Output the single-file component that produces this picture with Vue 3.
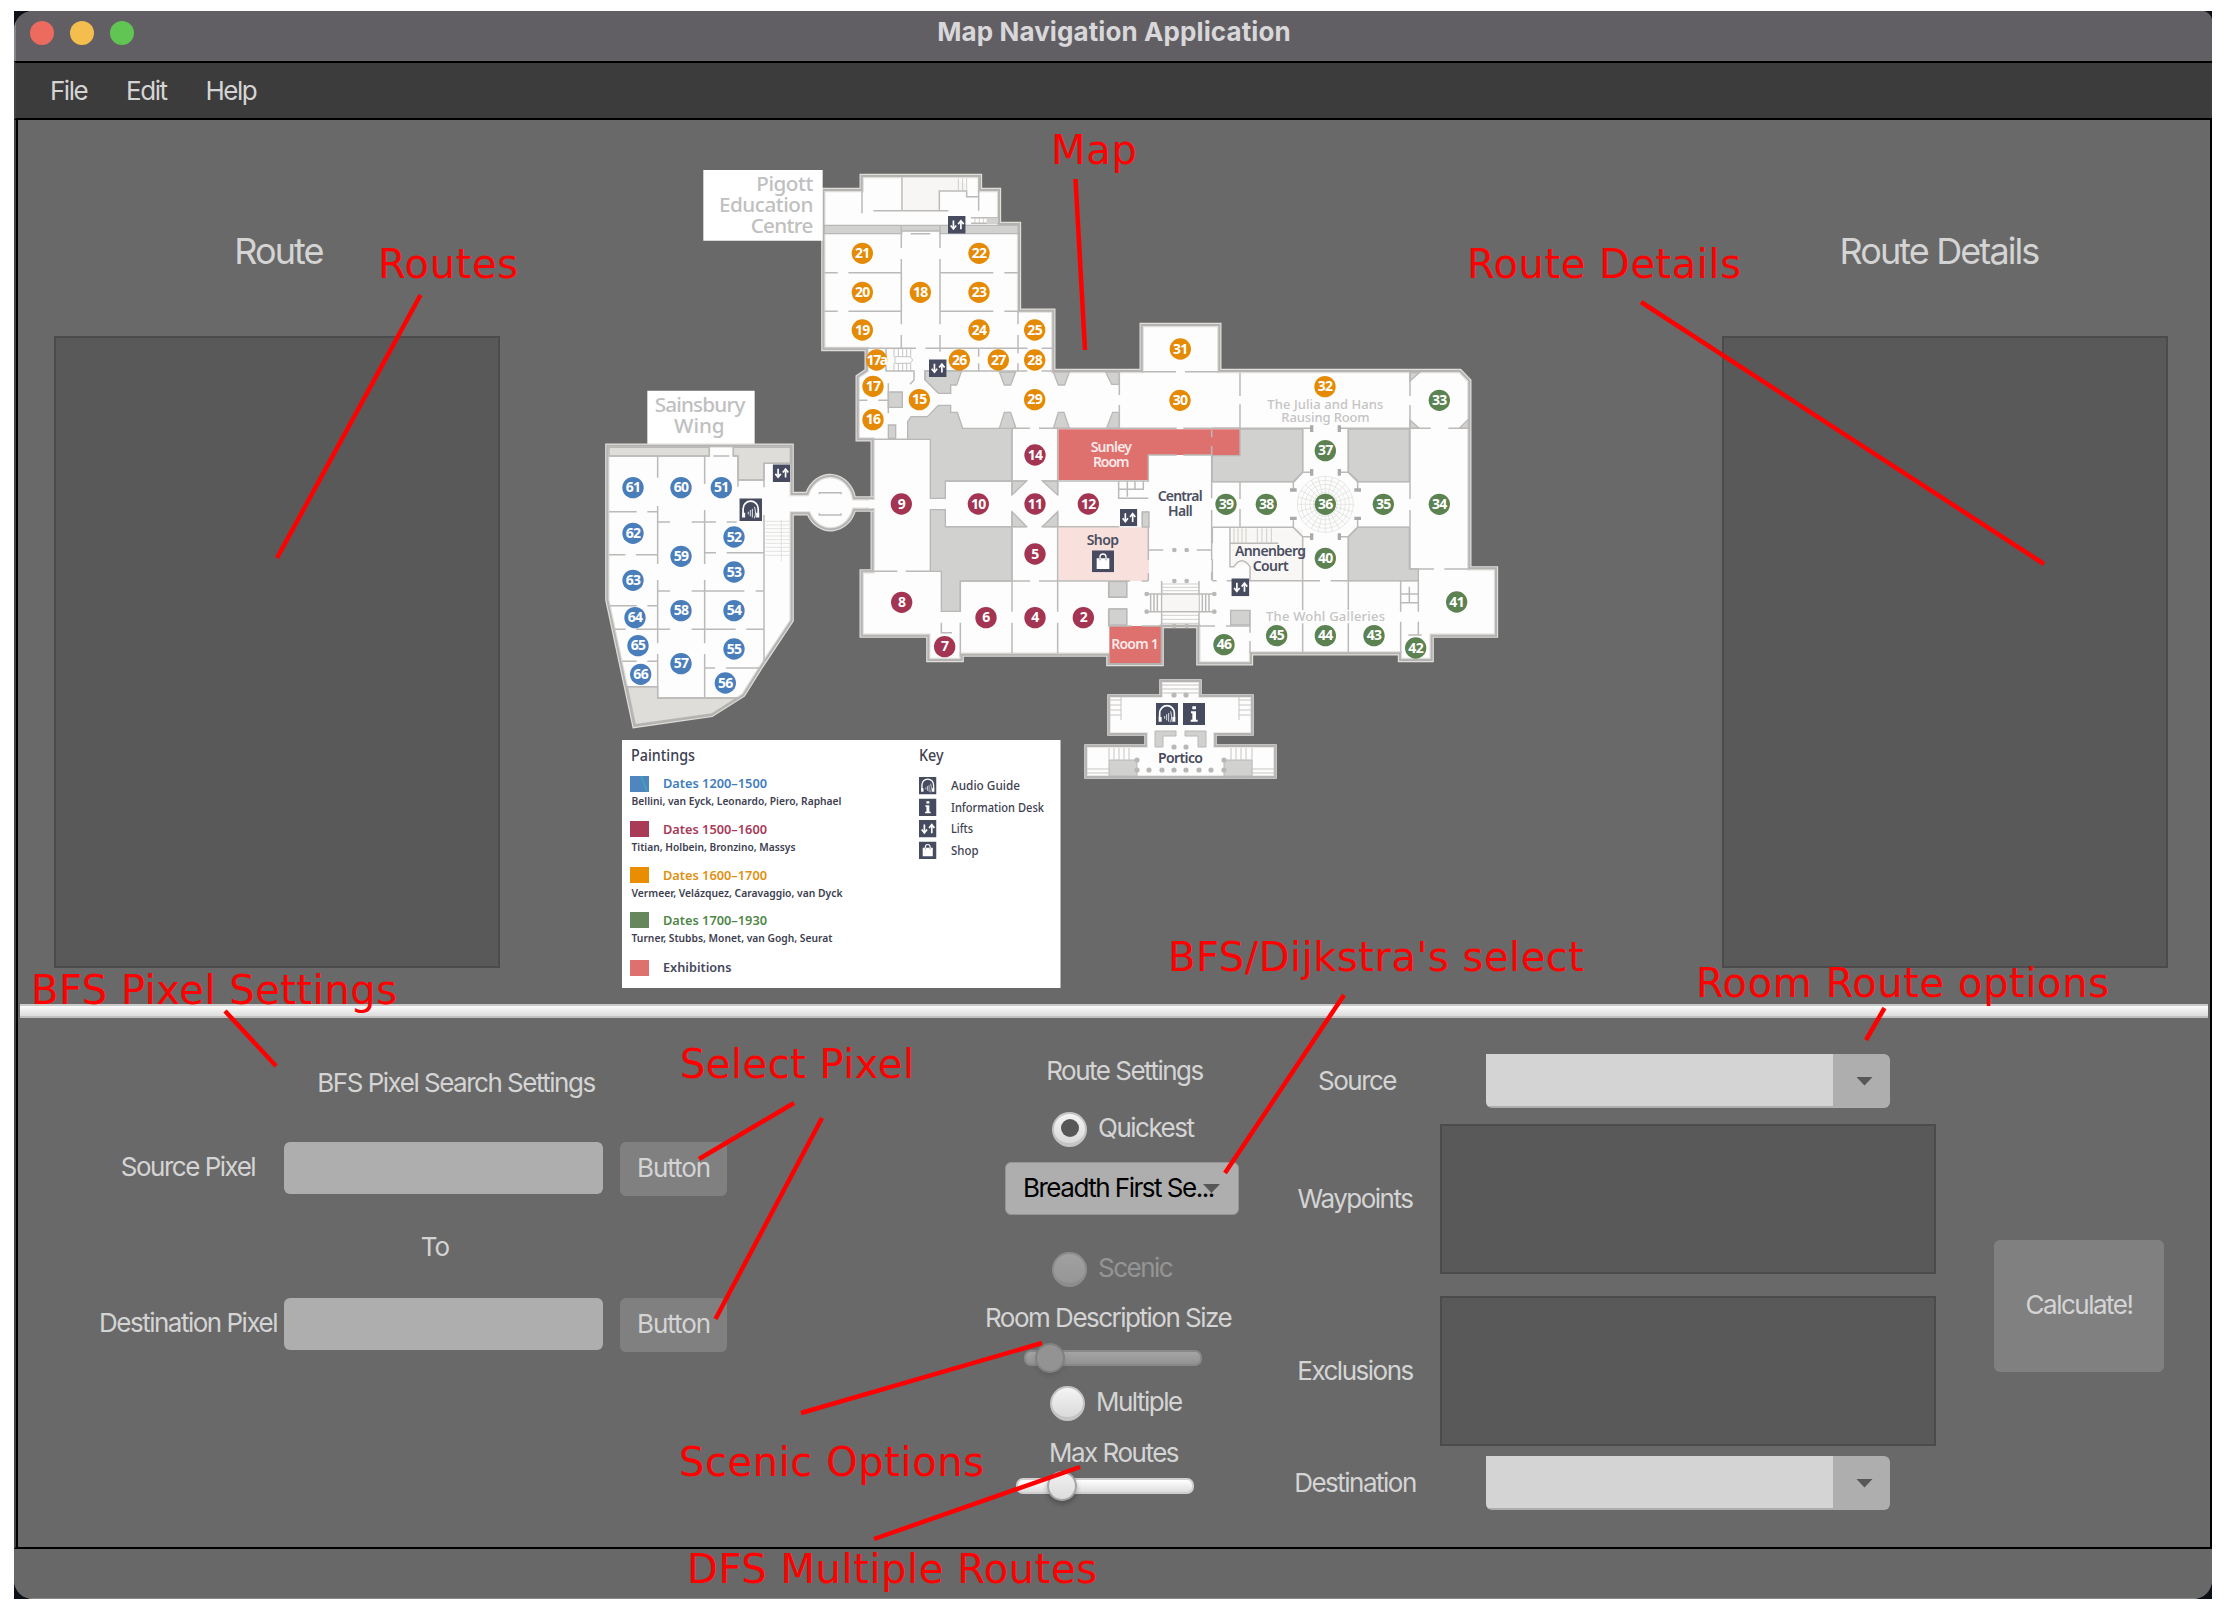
<script setup>
const menus = ['File', 'Edit', 'Help']

const blue = '#4a7ebb'
const red = '#a33552'
const orange = '#e58a05'
const green = '#5d8252'

// Outline of the main building
const mainHull =
  'M-50-570H65V-612H420V-570H477V-468H537V-208H640V-27H905V-165H1138V-27H1860L1888 2V565H1968V767H1775V840H1680V820H1233V850H1075V738H965V852H805V824H365V840H265V767H65V574H98V178H53V-10L80-28V-93H-50Z'
const wingHull =
  'M52 197H605V342H652A73 83 0 0 1 792 355H848V389H792A73 83 0 0 1 656 400H605V722L510 865L460 945L365 1005L133 1038L52 660Z'
const porticoHull =
  'M1161 681H1200V696H1252V734H1215V746H1275V777H1086V746H1146V734H1109V696H1161Z'

// Room markers, grouped by wing: number, x, y in the wing's own units
const pigottRooms = [
  ['21', 817, 310], ['22', 1167, 310], ['20', 817, 427], ['18', 991, 427], ['23', 1167, 427],
  ['19', 817, 540], ['24', 1167, 540], ['25', 1334, 540], ['17a', 860, 630], ['26', 1108, 630],
  ['27', 1225, 630], ['28', 1334, 630], ['17', 849, 709], ['15', 988, 749], ['29', 1334, 749], ['16', 849, 809],
]
const sainsburyRooms = [
  ['61', 129, 323], ['60', 273, 323], ['51', 394, 323], ['62', 129, 460], ['52', 432, 471], ['59', 273, 529],
  ['53', 432, 576], ['63', 129, 601], ['58', 273, 692], ['54', 432, 692], ['64', 135, 713], ['65', 144, 797],
  ['55', 432, 807], ['57', 273, 851], ['66', 152, 883], ['56', 406, 909],
]
const westRooms = [
  ['14', 585, 225], ['9', 184, 372], ['10', 415, 372], ['11', 585, 372], ['12', 745, 372], ['5', 585, 522],
  ['8', 185, 667], ['6', 438, 713], ['4', 585, 713], ['2', 730, 713], ['7', 314, 800],
]
const eastRooms = [
  ['31', 361, 117, 'o'], ['32', 795, 230, 'o'], ['30', 360, 271, 'o'], ['33', 1138, 271], ['37', 796, 422],
  ['39', 498, 583], ['38', 619, 583], ['36', 796, 583], ['35', 970, 583], ['34', 1138, 583], ['40', 796, 745],
  ['41', 1190, 876], ['45', 650, 977], ['44', 796, 977], ['43', 942, 977], ['46', 492, 1004], ['42', 1067, 1014],
]

const periods = [
  { color: '#4f86c0', ink: '#3f7dbd', y: 776, base: 787.5, dates: 'Dates 1200–1500', who: 'Bellini, van Eyck, Leonardo, Piero, Raphael', w: 210, nb: 804.5 },
  { color: '#a93a58', ink: '#a93a58', y: 821, base: 834, dates: 'Dates 1500–1600', who: 'Titian, Holbein, Bronzino, Massys', w: 164, nb: 850.5 },
  { color: '#e98e00', ink: '#e0900f', y: 867, base: 879.5, dates: 'Dates 1600–1700', who: 'Vermeer, Velázquez, Caravaggio, van Dyck', w: 211, nb: 896.5 },
  { color: '#66875b', ink: '#4f8747', y: 912, base: 925, dates: 'Dates 1700–1930', who: 'Turner, Stubbs, Monet, van Gogh, Seurat', w: 201, nb: 942 },
]
const keys = [
  { icon: 'audio', label: 'Audio Guide', y: 777, w: 69 },
  { icon: 'info', label: 'Information Desk', y: 798.5, w: 93 },
  { icon: 'lift', label: 'Lifts', y: 820, w: 22 },
  { icon: 'shop', label: 'Shop', y: 841.5, w: 27.5 },
]

const notes = [
  { t: 'Map', x: 1051, y: 164, w: 86, l: [1075.5, 179, 1085, 350] },
  { t: 'Routes', x: 378, y: 278, w: 140, l: [420.5, 295, 277, 558] },
  { t: 'Route Details', x: 1467, y: 278, w: 274, l: [1641, 302, 2044, 564] },
  { t: 'BFS Pixel Settings', x: 31, y: 1004, w: 366, l: [225, 1011, 276, 1066] },
  { t: "BFS/Dijkstra's select", x: 1168, y: 971, w: 416, l: [1344, 995, 1225, 1173] },
  { t: 'Room Route options', x: 1696, y: 997, w: 413, l: [1884.5, 1008, 1866, 1040] },
  { t: 'Select Pixel', x: 680, y: 1078, w: 234, l: [794, 1103, 699, 1159], m: [822, 1118, 715.5, 1319] },
  { t: 'Scenic Options', x: 679, y: 1476, w: 305, l: [801, 1413, 1042, 1343] },
  { t: 'DFS Multiple Routes', x: 687, y: 1583, w: 410, l: [874, 1539, 1080, 1467] },
]
</script>

<template>
  <div class="screen">
    <div class="backdrop">
      <div class="window">
        <header class="titlebar">
          <div class="lights">
            <i class="light close"></i>
            <i class="light min"></i>
            <i class="light max"></i>
          </div>
          <h1>Map Navigation Application</h1>
        </header>
        <nav class="menubar">
          <span v-for="m in menus" :key="m">{{ m }}</span>
        </nav>

        <main class="content">
          <section class="top">
            <div class="side left">
              <h2>Route</h2>
              <div class="panel tall"></div>
            </div>

            <svg class="map" viewBox="590 150 930 850" width="930" height="850">
              <defs>
                <symbol id="audio" viewBox="0 0 66 66">
                  <rect width="66" height="66" fill="#474b60" />
                  <path d="M11 46V30a22 22 0 0 1 44 0v16" fill="none" stroke="#fff" stroke-width="5" />
                  <path d="M8 42h9v14H8zM49 42h9v14h-9z" fill="#fff" />
                  <path d="M26 39v8M32 34v18M38 30v26M44 25q6 17 0 33" fill="none" stroke="#dfe0e6" stroke-width="3" />
                </symbol>
                <symbol id="info" viewBox="0 0 66 66">
                  <rect width="66" height="66" fill="#474b60" />
                  <path d="M28 10h11v9H28zM24 25h15v25h5v6H23v-6h5V31h-4z" fill="#fff" />
                </symbol>
                <symbol id="lift" viewBox="0 0 52 52">
                  <rect width="52" height="52" fill="#474b60" />
                  <path d="M16 13v22M38 39V18" stroke="#fff" stroke-width="5" />
                  <path d="M8 28l8 10 8-10M30 24l8-10 8 10" fill="none" stroke="#fff" stroke-width="5" />
                </symbol>
                <symbol id="shop" viewBox="0 0 66 66">
                  <rect width="66" height="66" fill="#474b60" />
                  <path d="M14 24h38v32H14z" fill="#fff" />
                  <path d="M24 25v-5a9 9 0 0 1 18 0v5" fill="none" stroke="#fff" stroke-width="4" />
                  <path d="M24 25v5M42 25v5" stroke="#474b60" stroke-width="2" />
                </symbol>
              </defs>

              <!-- Main building -->
              <g transform="translate(840 380) scale(.33333)">
                <path class="hull" :d="mainHull" />
                <g class="court">
                  <path d="M203 178V125L213 110H262L295 76H332V97H352L368 145H516V303H316V355H271V178Z" />
                  <path d="M271 389H316V440H516V603H361V694H304V574H271Z" />
                  <path d="M255-28H365L350 15H332V40H295L255 0Z" />
                  <path d="M478-24H527L512 15H493ZM640-24H688L674 15H655ZM797-24H838V13H815Z" />
                  <path d="M478 145L493 97H512L528 145ZM640 145L655 97H672L688 145ZM800 145L818 97H838V145Z" />
                  <path d="M145 36H187V82H145ZM145 135H167V175H145Z" />
                  <path d="M516 303H560L516 345ZM607 303H653V345ZM516 395L560 440H516ZM653 395V440H607Z" />
                </g>
                <path d="M655 148H1200V225H925V300H655Z" fill="#de706e" />
                <path d="M655 442H927V603H655Z" fill="#f8e1dd" />
                <path d="M808 738H965V850H808Z" fill="#de706e" />
                <path class="rim" :d="mainHull" />
                <g class="wall">
                  <path d="M98 178H203M271 574H197M172 574H65M98 355H40M98 389H40" />
                  <path d="M98 357v30" stroke="#fdfdfd" stroke-width="12" />
                  <path d="M516 145H570M597 145H1010M1030 145H1201M516 145V345M653 145V345M316 303H560M607 303H925V225H1010M1030 225H1115" />
                  <path d="M516 395V695M653 395V695M316 440H560M607 440H838M361 603H570M597 603H870M905 603H925" />
                  <path d="M516 728V820M653 728V820M361 728V830M304 728V758H336M361 694V603" />
                  <path d="M836 303V355H925M836 328H910V303M862 303V350M885 303V328M1115 150V172M1115 198V355M1115 390V540M1115 575V600" />
                  <path d="M838-27V45M838 75V145M907 397H925V540M907 397V440M925 580V603M927 510H970M1070 510H1115" />
                  <path d="M806 603V652H860V603M806 687V738H860V687H806M860 738H875M905 738H965M965 603V740M1077 603V740" />
                  <path d="M920 642H1125M920 695H1125M932 642V695M942 642V695M952 642V695M1087 642V695M1097 642V695M1107 642V695" />
                  <path d="M965 612H1077M965 622H1077M965 632H1077M965 706H1077M965 718H1077M965 730H1077" stroke-width="2" />
                </g>
                <rect x="968" y="645" width="108" height="48" fill="#f7f6f4" />
                <g fill="#b9b8b6">
                  <circle v-for="p in [[1003,510],[1040,510],[1003,603],[1040,603],[1003,738],[1040,738],[920,642],[920,695],[1123,642],[1123,695]]" :key="p.join()" :cx="p[0]" :cy="p[1]" r="7" />
                </g>
                <g class="place light">
                  <text x="752" y="216" textLength="124">Sunley</text>
                  <text x="759" y="261" textLength="109">Room</text>
                  <text x="814" y="806" textLength="142">Room 1</text>
                </g>
                <g class="place">
                  <text x="953" y="363" textLength="135">Central</text>
                  <text x="984" y="408" textLength="74">Hall</text>
                  <text x="740" y="494" textLength="97">Shop</text>
                </g>
                <use href="#lift" x="840" y="387" width="52" height="52" />
                <use href="#shop" x="756" y="511" width="66" height="66" />
                <g v-for="r in westRooms" :key="r[0]">
                  <circle :cx="r[1]" :cy="r[2]" r="32" :fill="red" />
                  <text class="num" :x="r[1]" :y="r[2] + 14">{{ r[0] }}</text>
                </g>
              </g>

              <!-- East side -->
              <g transform="translate(1060 310) scale(.33333)">
                <g class="court">
                  <path d="M540 357H728V487L703 515H457V437H540Z" />
                  <path d="M865 357H1048V515H892V510L865 487Z" />
                  <path d="M892 652H1048V777H1075V812H865V680Z" />
                  <path d="M147 815H200V861H147ZM147 897H200V945H147ZM247 606H267V651H247ZM512 901H569V945H512Z" />
                  <path d="M1050 188H1078L1050 213ZM1050 330L1078 355H1050ZM1225 328V355H1198Z" />
                </g>
                <path d="M515 655H728V812H572V760L515 770Z" fill="#f8f7f5" />
                <g class="wall">
                  <path d="M245 185H348M375 185H478M540 188V258M540 283V355M1050 188V258M1050 285V355M457 355H755M838 355H1112M1165 355H1225" />
                  <path d="M728 357V487L700 515V540M700 625V652L728 680V900M865 357V487L893 515V540M893 625V652L865 680V900M728 487H755M838 487H865M728 680H755M838 680H865" />
                  <path d="M457 515H700M893 515H1048M457 652H700M893 652H1048M540 515V567M540 597V652M1050 355V567M1050 600V777M1050 777H1122M1153 777H1228" />
                  <path d="M510 652V770H522Q545 735 570 770V810M512 700H655M457 812H470M500 812H780M812 812H1075M728 940V1028M865 940V1028M1022 812V905M1075 812V905M1022 935V1030M1075 935V975M1045 975H1085M1022 878H1075M1022 852H1075M1048 830V878" />
                  <path d="M415 948H465M498 948H570M570 900V968M570 993V1030M457 652V700M457 748V812" />
                  <path d="M522 655V698M534 655V698M546 655V698M558 655V698M592 655V698M606 655V698M620 655V698M634 655V698" stroke-width="2" />
                </g>
                <g stroke="#aaaaa9" stroke-width="10">
                  <path d="M755 346v20M838 346v20M755 477v20M838 477v20M755 670v20M838 670v20M690 540h20M883 540h20M690 625h20M883 625h20" />
                </g>
                <g fill="none" stroke="#dddcda" stroke-width="2">
                  <circle v-for="r in [84, 72, 60, 47, 36]" :key="r" cx="796" cy="583" :r="r" />
                  <path v-for="a in 12" :key="a" d="M712 583H880" :transform="`rotate(${a * 15} 796 583)`" />
                </g>
                <g class="place pale">
                  <text x="622" y="296" textLength="348">The Julia and Hans</text>
                  <text x="664" y="336" textLength="265">Rausing Room</text>
                  <text x="618" y="934" textLength="357">The Wohl Galleries</text>
                </g>
                <g class="place">
                  <text x="525" y="738" textLength="213">Annenberg</text>
                  <text x="578" y="783" textLength="108">Court</text>
                </g>
                <use href="#lift" x="514" y="805" width="54" height="54" />
                <g v-for="r in eastRooms" :key="r[0]">
                  <circle :cx="r[1]" :cy="r[2]" r="32" :fill="r[3] ? orange : green" />
                  <text class="num" :x="r[1]" :y="r[2] + 14">{{ r[0] }}</text>
                </g>
              </g>

              <!-- Pigott Education Centre -->
              <g transform="translate(590 150) scale(.33333)">
                <path d="M340 60H698V272H340Z" fill="#fff" />
                <path d="M940 85H1088L1128 100V122H1048V180H940Z" fill="#f7f6f4" />
                <path class="court" d="M703 226H1284V251H1050V243H935V251H703Z" />
                <g class="wall">
                  <path d="M816 120V190M850 182H1075M936 82V182M1048 182V123H1130V140H1165M1166 82V182M1143 203H1225M1143 220H1225M962 251H1021" />
                  <path d="M1105 85V120M1118 85V120M1130 85V120M1155 203V222M1168 203V222M1180 203V222" stroke-width="2" />
                  <path d="M1190 203H1222V222H1190Z" fill="#d1d1cf" stroke="none" />
                  <path d="M934 228V294M934 327V523M934 555V595M1050 228V294M1050 327V523M1050 555V605M703 368H743M775 368H934M703 484H743M775 484H934M1050 368H1210M1243 368H1284M1050 484H1210M1243 484H1284M1284 484V523M1284 555V610M1284 640V662" />
                  <path d="M700 595H978M1006 595H1312M1355 595H1390M888 597V663H972V690L960 703M1005 663H1312M1355 663H1390M1166 595V620M1166 640V662M805 751H832M865 751H895M895 700V790M1005 663V690" />
                  <path d="M915 620H960Q975 630 960 640H915ZM912 595V620M925 595V620M938 595V620M950 595V620M962 595V620M912 640V663M925 640V663M938 640V663M950 640V663M962 640V663" stroke-width="2.5" />
                </g>
                <g class="place name" text-anchor="end">
                  <text x="670" y="123" textLength="171">Pigott</text>
                  <text x="670" y="185" textLength="283">Education</text>
                  <text x="670" y="248" textLength="188">Centre</text>
                </g>
                <use href="#lift" x="1074" y="198" width="53" height="53" />
                <use href="#lift" x="1017" y="628" width="53" height="53" />
                <g v-for="r in pigottRooms" :key="r[0]">
                  <circle :cx="r[1]" :cy="r[2]" r="32" :fill="orange" />
                  <text class="num" :class="{ tight: r[0].length > 2 }" :x="r[1]" :y="r[2] + 14">{{ r[0] }}</text>
                </g>
              </g>

              <!-- Sainsbury Wing -->
              <g transform="translate(590 380) scale(.33333)">
                <path d="M172 32H494V200H172Z" fill="#fff" />
                <path class="hull" :d="wingHull" />
                <path d="M57 202H358V228H57ZM430 202H601V250H522V300H444V228H430ZM112 920H203V954H440L365 1002L136 1034Z" fill="#deddda" stroke="#b9b8b6" stroke-width="4" />
                <path class="rim" :d="wingHull" />
                <path d="M838 359H864V385H838Z" fill="#fdfdfd" />
                <g class="wall">
                  <path d="M57 228H358V202M430 202V228H444V320M370 228H418M522 322V250H600M444 300H520M203 228V293M203 378V552M203 600V790M203 822V954H440M344 228V312M344 390V552M344 600V790M344 822V954" />
                  <path d="M57 395H140M172 395H203M57 524H106M138 524H203M60 677H140M172 677H203M75 748H107M138 748H240M97 844H140M172 844H203M112 920H203M203 426H240M305 426H378M410 426H440M344 518H378M410 518H520M203 633H240M305 633H463M497 633H520M305 748H437M469 748H520M344 864H375M408 864H510M522 405V850" />
                  <path d="M526 424H600M526 435H600M526 446H600M526 457H600M526 468H600M526 479H600M526 490H600M526 502H600M526 514H600M526 526H600M574 420V545" stroke="#dddcda" stroke-width="2.5" />
                  <path d="M688 343V338H753V343M688 400V405H753V400" />
                </g>
                <g class="place name" text-anchor="middle">
                  <text x="330" y="97" textLength="272">Sainsbury</text>
                  <text x="328" y="159" textLength="152">Wing</text>
                </g>
                <use href="#lift" x="548" y="253" width="53" height="53" />
                <use href="#audio" x="448" y="355" width="68" height="68" />
                <g v-for="r in sainsburyRooms" :key="r[0]">
                  <circle :cx="r[1]" :cy="r[2]" r="32" :fill="blue" />
                  <text class="num" :x="r[1]" :y="r[2] + 14">{{ r[0] }}</text>
                </g>
              </g>

              <!-- Portico -->
              <g>
                <path :d="porticoHull" fill="#fdfdfd" stroke="#e2e1de" stroke-width="3.5" />
                <path :d="porticoHull" fill="none" stroke="#b4b3b1" stroke-width="1.8" />
                <path d="M1155 731H1176V736H1163V747H1155ZM1185 731H1206V747H1198V736H1185ZM1109 760H1137V776H1109ZM1224 760H1252V776H1224Z" fill="#d1d1cf" stroke="#b9b8b6" />
                <path d="M1162 685H1200M1162 689H1200M1162 693H1200M1110 700H1121M1110 705H1121M1110 710H1121M1110 715H1121M1121 697V720M1239 700H1251M1239 705H1251M1239 710H1251M1239 715H1251M1239 697V720M1109 748V760M1114 748V760M1119 748V760M1124 748V760M1129 748V760M1231 748V760M1236 748V760M1241 748V760M1246 748V760M1252 748V776M1087 769H1109M1087 773H1109M1252 769H1274M1252 773H1274" stroke="#c6c5c3" />
                <g fill="#b9b8b6">
                  <circle v-for="p in [[1174,695],[1186,695],[1174,747],[1186,747],[1137,760],[1224,760],[1137,770],[1149,770],[1162,770],[1174,770],[1186,770],[1199,770],[1211,770],[1224,770]]" :key="p.join()" :cx="p[0]" :cy="p[1]" r="2.6" />
                </g>
                <use href="#audio" x="1156" y="703" width="22" height="22" />
                <use href="#info" x="1183" y="703" width="22" height="22" />
                <text class="portico" x="1158" y="763" textLength="45">Portico</text>
              </g>

              <!-- Legend -->
              <g class="legend">
                <rect x="622" y="740" width="438.500" height="248" fill="#fff" />
                <text class="head" x="631" y="761" textLength="64" lengthAdjust="spacingAndGlyphs">Paintings</text>
                <text class="head" x="919" y="761" textLength="24.500" lengthAdjust="spacingAndGlyphs">Key</text>
                <g v-for="p in periods" :key="p.dates">
                  <rect x="630" :y="p.y" width="19" height="16" :fill="p.color" />
                  <text class="dates" x="663" :y="p.base" textLength="104" lengthAdjust="spacingAndGlyphs" :fill="p.ink">{{ p.dates }}</text>
                  <text class="who" x="631.500" :y="p.nb" :textLength="p.w" lengthAdjust="spacingAndGlyphs">{{ p.who }}</text>
                </g>
                <path d="M641 776l6 15" stroke="#3fa7b8" stroke-width="1.5" />
                <rect x="630" y="960" width="19" height="16" fill="#de706e" />
                <text class="dates" x="663" y="971.500" textLength="68.500" lengthAdjust="spacingAndGlyphs" fill="#45485c">Exhibitions</text>
                <g v-for="k in keys" :key="k.label">
                  <use :href="'#' + k.icon" x="919" :y="k.y" width="17.500" height="17.500" />
                  <text class="key" x="951" :y="k.y + 13" :textLength="k.w" lengthAdjust="spacingAndGlyphs">{{ k.label }}</text>
                </g>
              </g>
            </svg>

            <div class="side right">
              <h2>Route Details</h2>
              <div class="panel tall"></div>
            </div>
          </section>

          <div class="splitter"></div>

          <section class="bottom">
            <div class="pixels">
              <div class="label heading">BFS Pixel Search Settings</div>
              <div class="prow">
                <div class="label">Source Pixel</div>
                <div class="input"></div>
                <div class="button">Button</div>
              </div>
              <div class="label to">To</div>
              <div class="prow">
                <div class="label">Destination Pixel</div>
                <div class="input"></div>
                <div class="button">Button</div>
              </div>
            </div>

            <div class="settings">
              <div class="label rs">Route Settings</div>
              <div class="radio quick"><i class="dot on"></i><span>Quickest</span></div>
              <div class="choice"><span>Breadth First Se...</span><i class="arrow"></i></div>
              <div class="radio scenic"><i class="dot"></i><span>Scenic</span></div>
              <div class="label rds">Room Description Size</div>
              <div class="slider off"><i></i></div>
              <div class="radio multi"><i class="dot"></i><span>Multiple</span></div>
              <div class="label mr">Max Routes</div>
              <div class="slider on"><i></i></div>
            </div>

            <div class="rooms">
              <div class="rrow r1">
                <div class="label">Source</div>
                <div class="combo"><i class="arrow"></i></div>
              </div>
              <div class="rrow r2">
                <div class="label">Waypoints</div>
                <div class="panel list"></div>
              </div>
              <div class="rrow r3">
                <div class="label">Exclusions</div>
                <div class="panel list"></div>
              </div>
              <div class="rrow r4">
                <div class="label">Destination</div>
                <div class="combo"><i class="arrow"></i></div>
              </div>
            </div>

            <div class="calc">Calculate!</div>
          </section>
        </main>
        <footer class="status"></footer>
      </div>
    </div>

    <svg class="notes" viewBox="0 0 2239 1622" width="2239" height="1622">
      <g v-for="n in notes" :key="n.t">
        <text :x="n.x" :y="n.y" :textLength="n.w">{{ n.t }}</text>
        <line :x1="n.l[0]" :y1="n.l[1]" :x2="n.l[2]" :y2="n.l[3]" />
        <line v-if="n.m" :x1="n.m[0]" :y1="n.m[1]" :x2="n.m[2]" :y2="n.m[3]" />
      </g>
    </svg>
  </div>
</template>

<style>
body {
  margin: 0;
  background: #fff;
}
</style>

<style scoped>
* {
  box-sizing: border-box;
}
.screen {
  position: relative;
  width: 2239px;
  height: 1622px;
  padding: 11px 0 0 14px;
  overflow: hidden;
  background: #fff;
  font-family: Inter, 'Liberation Sans', sans-serif;
  font-size: 26px;
  line-height: 30px;
  letter-spacing: -1.5px;
  color: #d4d4d4;
  white-space: nowrap;
}
.backdrop {
  width: 2198px;
  height: 1588px;
  background: #0d1018;
}
.window {
  display: flex;
  flex-direction: column;
  height: 100%;
  overflow: hidden;
  border-radius: 19px 10px 19px 19px;
  background: #696969;
}
.titlebar {
  display: flex;
  align-items: flex-start;
  height: 50px;
  background: #625f64;
  border-left: 2px solid #858389;
}
.lights {
  display: flex;
  gap: 16px;
  width: 400px;
  padding: 10px 0 0 14px;
}
.light {
  width: 24px;
  height: 24px;
  border-radius: 50%;
}
.close { background: #ed6a5e; }
.min { background: #f4be4f; }
.max { background: #61c554; }
h1 {
  flex: 1;
  margin: 6px 400px 0 0;
  font-size: 26px;
  line-height: 30px;
  font-weight: 700;
  text-align: center;
  letter-spacing: 0.1px;
  color: #d8d7d9;
}
.menubar {
  display: flex;
  gap: 39px;
  height: 59px;
  padding: 13px 0 0 34px;
  background: #3c3c3c;
  border-top: 2px solid #000;
  border-bottom: 2px solid #000;
  border-left: 2px solid #444;
}
.content {
  height: 1429px;
  background: #696969;
  border-left: 2px solid #444;
  border-bottom: 2px solid #000;
  box-shadow: inset 2px 0 #000, inset -2px 0 #000;
}
.status {
  flex: 1;
  background: #686868;
  border-bottom: 1px solid #8a8a8a;
}
.top {
  display: flex;
  justify-content: space-between;
  height: 884px;
  padding: 0 44px 0 38px;
}
.side {
  width: 446px;
  padding-top: 107px;
}
h2 {
  margin: 0 0 61px;
  height: 48px;
  font-size: 36px;
  font-weight: 400;
  line-height: 48px;
  letter-spacing: -1.9px;
  text-align: center;
}
.left h2 { padding-left: 3px; }
.right h2 { padding-right: 12px; }
.panel {
  background: #595959;
  border: 2px solid #4b4b4b;
}
.tall {
  height: 632px;
}
.map {
  margin: 30px 112px 0 0;
}
.splitter {
  height: 14px;
  margin: 0 4px 0 4px;
  background: linear-gradient(#fbfbfb, #dcdcdc);
  border-top: 2px solid #c9c9c9;
  border-bottom: 2px solid #c0c0c0;
}
.bottom {
  display: flex;
  height: 529px;
  padding-left: 2px;
}
.pixels {
  width: 967px;
  padding: 50px 0 0 74px;
}
.heading {
  width: 278px;
  margin-left: 225px;
  text-align: center;
}
.prow {
  display: flex;
  margin-top: 44px;
}
.prow .label {
  width: 192px;
  padding-top: 10px;
  text-align: center;
}
.input {
  width: 319px;
  height: 52px;
  margin-right: 17px;
  border-radius: 6px;
  background: #aeaeae;
}
.button {
  width: 107px;
  height: 54px;
  border-radius: 6px;
  background: #808080;
  line-height: 52px;
  text-align: center;
  letter-spacing: -1.1px;
}
.to {
  width: 60px;
  margin: 36px 0 -8px 313px;
  text-align: center;
  letter-spacing: -1px;
}
.settings {
  width: 305px;
  padding-top: 38px;
}
.rs {
  width: 159px;
  margin-left: 60px;
  text-align: center;
}
.radio {
  display: flex;
  align-items: center;
  gap: 11px;
  height: 36px;
  margin-left: 67px;
}
.radio span {
  margin-top: -2px;
}
.quick { margin-top: 25px; }
.scenic { margin-top: 36px; opacity: 0.4; }
.multi { margin: 19px 0 0 65px; }
.dot {
  display: flex;
  align-items: center;
  justify-content: center;
  width: 35px;
  height: 35px;
  border-radius: 50%;
  background: linear-gradient(#f4f4f4, #dadada);
  border: 2px solid #c4c4c4;
  border-bottom-width: 4px;
}
.dot.on::after {
  content: '';
  width: 18px;
  height: 18px;
  border-radius: 50%;
  background: #575757;
}
.choice {
  display: flex;
  align-items: center;
  width: 234px;
  height: 53px;
  margin: 15px 0 0 20px;
  padding-left: 17px;
  border: 1px solid #959595;
  border-radius: 6px;
  background: #aeaeae;
  color: #000;
}
.choice span {
  width: 180px;
  margin-top: -1px;
}
.arrow {
  width: 17px;
  height: 9px;
  background: #575757;
  clip-path: polygon(0 0, 100% 0, 50% 100%);
}
.rds {
  width: 245px;
  margin-top: 16px;
  text-align: center;
}
.slider {
  width: 178px;
  height: 16px;
  border-radius: 7px;
  background: linear-gradient(#fff, #dedede);
  border: 2px solid #cfcfcf;
}
.slider i {
  display: block;
  width: 30px;
  height: 30px;
  margin-top: -9px;
  border-radius: 50%;
  background: linear-gradient(#f0f0f0, #dcdcdc);
  border: 2px solid #a4a4a4;
  box-shadow: 0 3px 5px rgba(0, 0, 0, 0.25);
}
.slider.off {
  margin: 17px 0 0 39px;
  background: linear-gradient(#a4a4a4, #929292);
  border-color: #888;
}
.slider.off i {
  margin-left: 9px;
  background: #939393;
  border-color: #808080;
  box-shadow: 0 3px 5px rgba(0, 0, 0, 0.1);
}
.slider.on { margin: 10px 0 0 31px; }
.slider.on i { margin-left: 29px; }
.mr {
  width: 128px;
  margin: 17px 0 0 64px;
  text-align: center;
}
.rooms {
  width: 704px;
  padding-top: 36px;
}
.rrow {
  display: flex;
}
.rrow .label {
  width: 130px;
  text-align: center;
}
.list {
  width: 496px;
  height: 150px;
  margin-left: 20px;
}
.combo {
  display: flex;
  align-items: center;
  width: 404px;
  height: 54px;
  margin-left: 66px;
  padding: 0 0 0 370px;
  border-radius: 0 6px 6px 6px;
  background: linear-gradient(#d4d4d4, #d4d4d4) 0 0 / 347px 52px no-repeat #aeaeae;
}
.r1 .label { padding: 12px 0 0 4px; }
.r2 { margin-top: 16px; }
.r2 .label { padding-top: 60px; }
.r3 { margin-top: 22px; }
.r3 .label { padding-top: 60px; }
.r4 { margin-top: 10px; }
.r4 .label { padding-top: 12px; }
.calc {
  width: 170px;
  height: 132px;
  margin-top: 222px;
  border-radius: 6px;
  background: #808080;
  line-height: 130px;
  text-align: center;
}
.hull {
  fill: #fdfdfd;
  stroke: #dfdedb;
  stroke-width: 13;
}
.rim {
  fill: none;
  stroke: #b4b3b1;
  stroke-width: 6;
}
.court {
  fill: #d1d1cf;
  stroke: #b9b8b6;
  stroke-width: 4;
}
.wall {
  fill: none;
  stroke: #bbbab8;
  stroke-width: 4.5;
}
.map text {
  font-family: 'Noto Sans', 'Open Sans', sans-serif;
  letter-spacing: 0;
}
.place text {
  font-size: 42px;
  font-weight: 600;
  fill: #4b4e61;
}
.place.light text { fill: #fbe9e8; }
.place.pale text { font-size: 39px; font-weight: 500; fill: #c5c4c4; }
.place.name text { font-size: 62px; font-weight: 500; fill: #c0c0c0; }
.map .num {
  font-size: 42px;
  font-weight: 700;
  letter-spacing: -2px;
  text-anchor: middle;
  fill: #fff;
}
.map .tight {
  letter-spacing: -4px;
}
.map .portico {
  font-size: 14px;
  font-weight: 600;
  fill: #45485c;
}
.legend .head { font-size: 16px; font-weight: 500; fill: #3d4050; }
.legend .dates { font-size: 13px; font-weight: 600; }
.legend .who { font-size: 11px; font-weight: 600; fill: #3d4050; }
.legend .key { font-size: 13px; font-weight: 500; fill: #3d4050; }
.notes {
  position: absolute;
  left: 0;
  top: 0;
}
.notes text {
  font-family: 'DejaVu Sans', sans-serif;
  font-size: 40px;
  letter-spacing: 0;
  fill: #f00;
}
.notes line {
  stroke: #f00;
  stroke-width: 4.5;
}
</style>
